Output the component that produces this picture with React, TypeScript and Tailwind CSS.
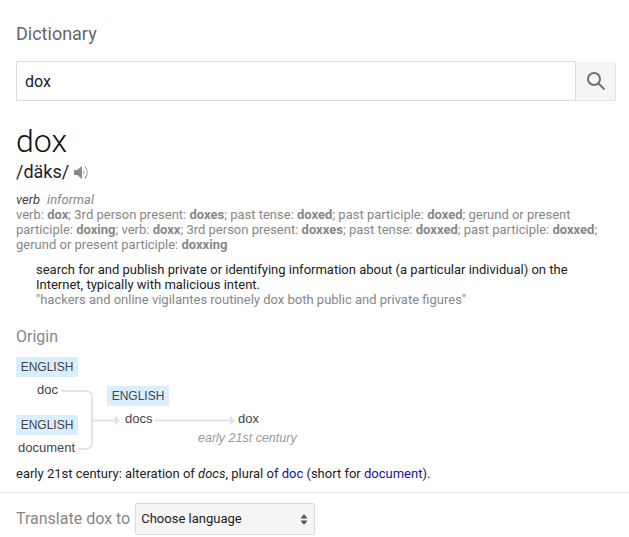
import React from 'react'

const EtymologyDiagram = () => {
  return (
    <div className="relative mt-[10px] h-[102px] w-[300px] font-['Liberation_Sans',sans-serif] text-[13px] text-[#444]">
      <svg className="absolute left-0 top-0" width="300" height="102" fill="none">
        <path d="M45 34H70Q76 34 76 40V86Q76 92 70 92H63" stroke="#e3e3e3" strokeWidth="2" />
        <path d="M77 63.500H99M139 63.500H214" stroke="#e3e3e3" strokeWidth="2" />
        <path d="M99 58.500L104 63.500L99 68.500ZM214 58.500L219 63.500L214 68.500Z" fill="#e3e3e3" />
      </svg>
      <div className="absolute left-0 top-0 flex h-5 w-[62px] items-center justify-center bg-[#d9eeff] text-[12px]">ENGLISH</div>
      <div className="absolute left-[21px] top-[25px] leading-4">doc</div>
      <div className="absolute left-0 top-[58px] flex h-5 w-[62px] items-center justify-center bg-[#d9eeff] text-[12px]">ENGLISH</div>
      <div className="absolute left-[2px] top-[83px] leading-4">document</div>
      <div className="absolute left-[91px] top-[29px] flex h-5 w-[62px] items-center justify-center bg-[#d9eeff] text-[12px]">ENGLISH</div>
      <div className="absolute left-[109px] top-[54px] leading-4">docs</div>
      <div className="absolute left-[222px] top-[54px] leading-4">dox</div>
      <div className="absolute left-[182px] top-[73px] text-[12.500px] italic leading-4 text-[#999]">early 21st century</div>
    </div>
  )
}

const App: React.FC = () => {
  return (
    <main className="h-[537px] w-[629px] overflow-hidden bg-white font-['Roboto',sans-serif]">
      <div className="px-4 pt-[22px]">
        <h2 className="text-[18px] leading-[24px] text-[#666]">Dictionary</h2>
        <div className="mt-[15px] flex w-[600px] items-start">
          <div className="flex h-10 w-[560px] items-center rounded-[1px] border border-[#dcdcdc] px-2 pt-px text-[16px] text-[#222]">dox</div>
          <div className="mt-px flex h-[39px] w-10 items-center justify-center rounded-[1px] border border-l-0 border-t-0 border-[#e2e2e2] bg-[#f5f5f5]">
            <svg width="20" height="20" viewBox="0 0 20 20" fill="none" stroke="#707070" strokeWidth="2">
              <circle cx="8" cy="8" r="6" />
              <path d="M12.500 12.500L18.500 18.500" />
            </svg>
          </div>
        </div>
        <h1 className="mt-[20px] text-[32px] font-light leading-[40px] text-[#111]">dox</h1>
        <div className="flex h-[20px] items-center gap-[5px] text-[18px] text-[#222]">
          <span>/däks/</span>
          <svg className="mt-[2px]" width="15" height="15" viewBox="0 0 15 15" fill="#8a8a8a">
            <path d="M0 5H3L8 1V14L3 10H0Z" />
            <path d="M9.500 5Q11.500 7.500 9.500 10ZM10.500 2Q15.500 7.500 10.500 13L11.200 13.700Q16.500 7.500 11.200 1.300Z" />
          </svg>
        </div>

        <div className="mt-[11px] text-[13px] leading-[15px] text-[#878787]">
          <div>
            <i className="text-[#444]">verb</i>
            <i className="ml-[7px]">informal</i>
          </div>
          <p>
            verb: <b>dox</b>; 3rd person present: <b>doxes</b>; past tense: <b>doxed</b>; past participle: <b>doxed</b>; gerund or present participle: <b>doxing</b>; verb: <b>doxx</b>; 3rd person present: <b>doxxes</b>; past tense: <b>doxxed</b>; past participle: <b>doxxed</b>; gerund or present participle: <b>doxxing</b>
          </p>
        </div>

        <div className="ml-5 mt-[10px] text-[13px] leading-[15px] text-[#222]">
          <p>search for and publish private or identifying information about (a particular individual) on the Internet, typically with malicious intent.</p>
          <p className="text-[#878787]">"hackers and online vigilantes routinely dox both public and private figures"</p>
        </div>

        <h3 className="mt-[20px] text-[16px] leading-[20px] text-[#878787]">Origin</h3>
        <EtymologyDiagram />
        <p className="mt-[7px] text-[13px] leading-[16px] text-[#222]">
          early 21st century: alteration of <i>docs</i>, plural of <span className="text-[#1a0dab]">doc</span> (short for <span className="text-[#1a0dab]">document</span>).
        </p>
      </div>
      <div className="mt-[10px] flex items-center gap-[5px] border-t border-[#e8e8e8] px-4 pt-[10px]">
        <span className="text-[16px] text-[#878787]">Translate dox to</span>
        <div className="flex h-8 w-[180px] items-center justify-between rounded-[2px] border border-[#dcdcdc] bg-[#f5f5f5] pl-[5px] pr-[6px] text-[13px] text-[#222]">
          <span>Choose language</span>
          <svg width="8" height="11" viewBox="0 0 8 11" fill="#555">
            <path d="M4 0L7.500 4.500H0.500ZM0.500 6.500H7.500L4 11Z" />
          </svg>
        </div>
      </div>
    </main>
  )
}

export default App
